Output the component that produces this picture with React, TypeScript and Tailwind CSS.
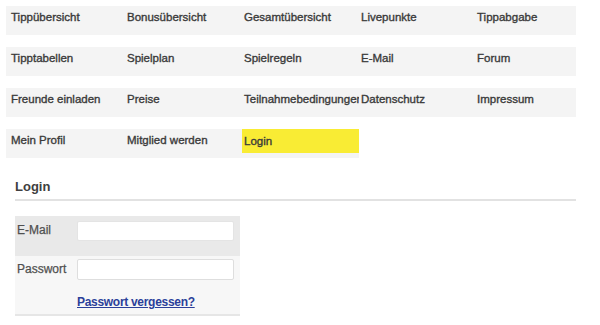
import React from 'react';

const ROWS: string[][] = [
  ['Tippübersicht', 'Bonusübersicht', 'Gesamtübersicht', 'Livepunkte', 'Tippabgabe'],
  ['Tipptabellen', 'Spielplan', 'Spielregeln', 'E-Mail', 'Forum'],
  ['Freunde einladen', 'Preise', 'Teilnahmebedingungen', 'Datenschutz', 'Impressum'],
  ['Mein Profil', 'Mitglied werden', 'Login'],
];

export default function App() {
  return (
    <div className="w-[600px] h-[325px] bg-white overflow-hidden font-['Liberation_Sans',Arial,sans-serif]">
      {/* Navigation */}
      <div className="pt-[6px] pl-[6px] flex flex-col gap-[12px]">
        {ROWS.map((row, r) => (
          <div
            key={r}
            className={`grid grid-cols-[116px_117px_117px_116px_101px] h-[29px] bg-[#f4f4f4] pl-[3px] ${
              row.length < 5 ? 'w-[353px]' : 'w-[570px]'
            }`}
          >
            {row.map((item) => (
              <div
                key={item}
                className={`overflow-hidden whitespace-nowrap text-[11.5px] text-[#3a3a3a] [-webkit-text-stroke:0.35px_#3a3a3a] pl-[2px] ${
                  item === 'Login' ? 'bg-[#f9ec34] h-[24px] leading-[24px] pl-[1px]' : 'leading-[23px]'
                }`}
              >
                {item}
              </div>
            ))}
          </div>
        ))}
      </div>

      {/* Login */}
      <div className="ml-[15px] mt-[21px] w-[561px]">
        <h2 className="text-[13px] font-bold text-[#404040] leading-[16px] pb-[4px] border-b-2 border-[#e2e2e2]">
          Login
        </h2>
        <div className="mt-[15px] w-[225px] border-b-2 border-[#e6e6e6]">
          <div className="h-[40px] bg-[#e9e9e9] flex pt-[5px]">
            <span className="w-[62px] pl-[2px] text-[12px] text-[#505050] [-webkit-text-stroke:0.25px_#505050] leading-[16px] pt-[1px]">E-Mail</span>
            <div className="w-[157px] h-[20px] bg-white border border-[#e4e4e4] rounded-[2px]" />
          </div>
          <div className="bg-[#f7f7f7] pt-[3px] pb-[5px]">
            <div className="flex">
              <span className="w-[62px] pl-[2px] text-[12px] text-[#505050] [-webkit-text-stroke:0.25px_#505050] leading-[16px] pt-[2px]">Passwort</span>
              <div className="w-[157px] h-[21px] bg-white border border-[#dedede] rounded-[2px]" />
            </div>
            <div className="pl-[62px] mt-[15px] text-[12px] leading-[14px]">
              <a href="#" className="font-bold text-[#2b3f9a] underline tracking-[-0.3px]">
                Passwort vergessen?
              </a>
            </div>
          </div>
        </div>
      </div>
    </div>
  );
}
